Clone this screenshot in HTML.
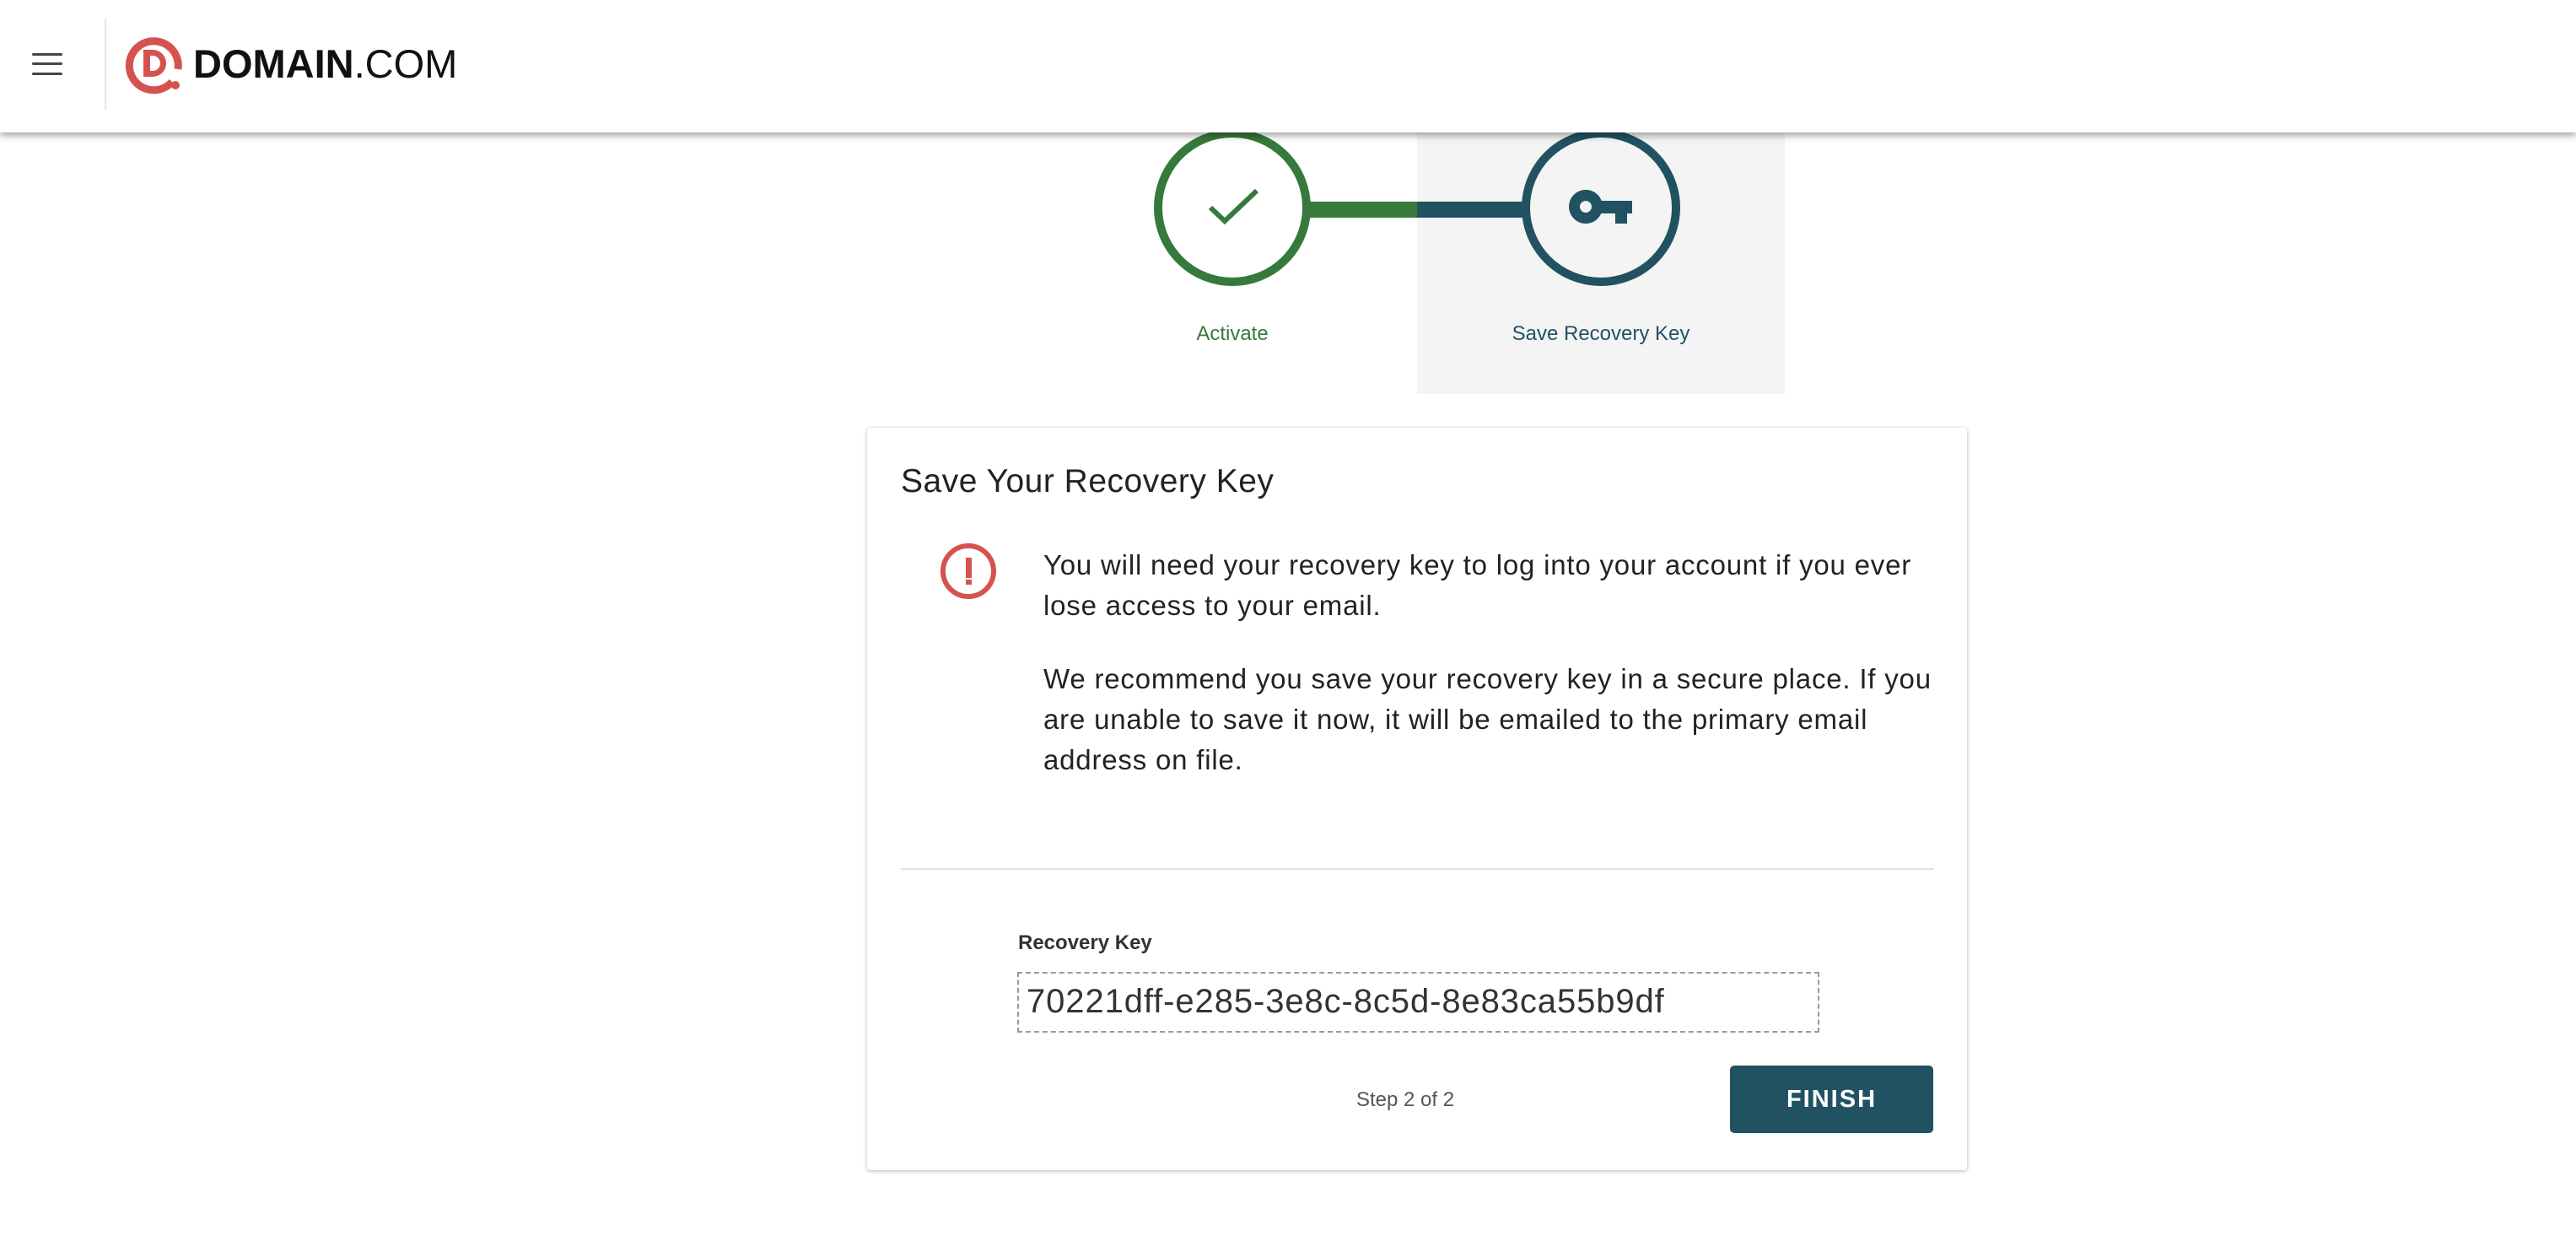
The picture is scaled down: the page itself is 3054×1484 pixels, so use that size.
<!DOCTYPE html>
<html><head><meta charset="utf-8">
<style>
*{margin:0;padding:0;box-sizing:border-box}
html,body{width:3054px;height:1484px;background:#fff;overflow:hidden;font-family:"Liberation Sans",sans-serif}
.hdr{position:absolute;left:0;top:0;width:3054px;height:157px;background:#fff;box-shadow:0 4px 8px rgba(0,0,0,.35);z-index:5}
.ham{position:absolute;left:38px;width:36px;height:3px;background:#444;border-radius:2px}
.div{position:absolute;left:124px;top:22px;width:2px;height:108px;background:#e6e6e6}
.brand{position:absolute;left:229px;top:46px;font-size:47px;color:#111;letter-spacing:0px;line-height:60px}
.abs{position:absolute}
.card{position:absolute;left:1028px;top:507px;width:1304px;height:880px;background:#fff;border-radius:4px;box-shadow:0 1px 5px rgba(0,0,0,.3)}
.p{position:absolute;left:1237px;font-size:33px;letter-spacing:0.8px;color:#222;white-space:nowrap;line-height:48px}
</style></head><body>
<div class="hdr">
  <div class="ham" style="top:63px"></div>
  <div class="ham" style="top:74px"></div>
  <div class="ham" style="top:86px"></div>
  <div class="div"></div>
  <svg class="abs" style="left:145px;top:38px" width="80" height="80" viewBox="145 38 80 80">
    <path d="M204 97 A29 29 0 1 1 211 82" fill="none" stroke="#d5534f" stroke-width="9"/>
    <circle cx="208" cy="101" r="5" fill="#d5534f"/>
    <path d="M170 59 h11 a15 15 0 0 1 0 32 h-11 z M178 66 v18 h3 a9 9 0 0 0 0 -18 z" fill="#d5534f" fill-rule="evenodd"/>
  </svg>
  <div class="brand"><b>DOMAIN</b>.COM</div>
</div>

<div class="abs" style="left:1680px;top:157px;width:436px;height:310px;background:#f4f4f4"></div>
<div class="abs" style="left:1550px;top:239px;width:132px;height:19px;background:#367a3b"></div>
<div class="abs" style="left:1680px;top:239px;width:128px;height:19px;background:#215262"></div>
<div class="abs" style="left:1368px;top:153px;width:186px;height:186px;border:10px solid #367a3b;border-radius:50%;background:#fff"></div>
<div class="abs" style="left:1804px;top:153px;width:188px;height:186px;border:10px solid #215262;border-radius:50%;background:#f4f4f4"></div>
<svg class="abs" style="left:1420px;top:210px" width="90" height="70" viewBox="1420 210 90 70">
  <path d="M1435 246 L1452 262 L1490 226" fill="none" stroke="#367a3b" stroke-width="6"/>
</svg>
<svg class="abs" style="left:1850px;top:215px" width="100" height="60" viewBox="1850 215 100 60">
  <path d="M1880 225 a20 20 0 1 0 0.01 0 z M1880 238 a7 7 0 1 1 -0.01 0 z" fill="#215262" fill-rule="evenodd"/>
  <rect x="1895" y="238" width="40" height="15" fill="#215262"/>
  <rect x="1915" y="245" width="14" height="20" fill="#215262"/>
</svg>
<div class="abs" style="left:1361px;top:382px;width:200px;text-align:center;font-size:24px;color:#367a3b">Activate</div>
<div class="abs" style="left:1698px;top:382px;width:400px;text-align:center;font-size:24px;color:#215262">Save Recovery Key</div>
<div class="card"></div>
<div class="abs" style="left:1068px;top:549px;font-size:39px;letter-spacing:0.5px;color:#222">Save Your Recovery Key</div>
<svg class="abs" style="left:1110px;top:640px" width="76" height="76" viewBox="1110 640 76 76">
  <circle cx="1148" cy="677" r="30" fill="none" stroke="#d5534f" stroke-width="6"/>
  <rect x="1145" y="661" width="7" height="24" fill="#d5534f"/>
  <rect x="1145" y="687" width="7" height="6" fill="#d5534f"/>
</svg>
<div class="p" style="top:646px">You will need your recovery key to log into your account if you ever<br>lose access to your email.</div>
<div class="p" style="top:781px">We recommend you save your recovery key in a secure place. If you<br>are unable to save it now, it will be emailed to the primary email<br>address on file.</div>
<div class="abs" style="left:1068px;top:1029px;width:1225px;height:2px;background:#e2e2e2"></div>
<div class="abs" style="left:1207px;top:1104px;font-size:24px;font-weight:bold;color:#333">Recovery Key</div>
<div class="abs" style="left:1206px;top:1152px;width:951px;height:72px;border:2px dashed #999"></div>
<div class="abs" style="left:1217px;top:1162px;font-size:40px;letter-spacing:0.9px;color:#333;line-height:50px">70221dff-e285-3e8c-8c5d-8e83ca55b9df</div>
<div class="abs" style="left:1592px;top:1290px;width:148px;text-align:center;font-size:24px;color:#555">Step 2 of 2</div>
<div class="abs" style="left:2051px;top:1263px;width:241px;height:80px;background:#215262;border-radius:5px;color:#fff;font-weight:bold;font-size:29px;letter-spacing:2px;text-align:center;line-height:80px">FINISH</div>
</body></html>
